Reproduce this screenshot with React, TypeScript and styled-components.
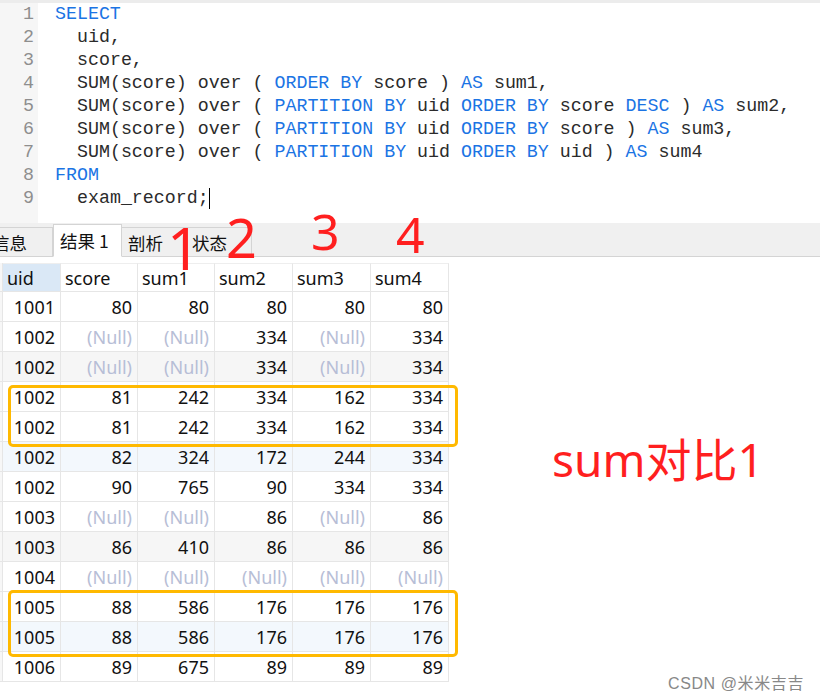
import { Fragment } from 'react';
import styled, { createGlobalStyle } from 'styled-components';

const GlobalStyle = createGlobalStyle`
  html, body {
    margin: 0;
    padding: 0;
    background: #ffffff;
  }
`;

const Page = styled.div`
  position: relative;
  width: 820px;
  height: 699px;
  overflow: hidden;
  background: #ffffff;
  font-family: "Noto Sans", "Noto Sans CJK SC", sans-serif;
`;

const Editor = styled.div`
  display: flex;
  height: 223px;
  border-top: 3px solid #ececec;
  box-sizing: border-box;
`;

const Gutter = styled.div`
  width: 38px;
  background: #f6f6f6;
  display: flex;
  flex-direction: column;
  align-items: flex-end;
  padding-right: 4px;
  box-sizing: border-box;
`;

const LineNo = styled.div`
  height: 23px;
  line-height: 23px;
  font-family: "Liberation Mono", monospace;
  font-size: 18.3px;
  color: #8e8e8e;
`;

const Code = styled.div`
  flex: 1;
  padding-left: 17px;
  font-family: "Liberation Mono", monospace;
  font-size: 18.3px;
  color: #2b2b2b;
`;

const Line = styled.div<{ indent?: boolean }>`
  height: 23px;
  line-height: 23px;
  white-space: pre;
  padding-left: ${(props) => (props.indent ? '22px' : '0')};
`;

const Kw = styled.span`
  color: #1b74e4;
`;

const Caret = styled.span`
  display: inline-block;
  width: 0;
  height: 21px;
  border-left: 1px solid #000;
  vertical-align: middle;
`;

const TabBar = styled.div`
  display: flex;
  align-items: flex-end;
  height: 34px;
  margin-left: -14px;
  background: #f0f0f0;
  border-bottom: 1px solid #d4d4d4;
  box-sizing: border-box;
`;

const Tab = styled.div<{ active?: boolean; w: number }>`
  width: ${(props) => props.w}px;
  height: ${(props) => (props.active ? '33px' : '30px')};
  margin-bottom: -1px;
  box-sizing: border-box;
  display: flex;
  align-items: center;
  padding-left: 6px;
  font-family: "Noto Sans CJK SC", sans-serif;
  font-size: 17.5px;
  color: #111;
  background: ${(props) => (props.active ? '#ffffff' : '#f0f0f0')};
  border: 1px solid #d4d4d4;
  border-bottom: ${(props) => (props.active ? '1px solid #ffffff' : '1px solid #d4d4d4')};
  border-left: ${(props) => (props.active ? '1px solid #d4d4d4' : 'none')};
`;

const Grid = styled.div`
  display: grid;
  grid-template-columns: 3px 58px 77px 77px 78px 78px 78px;
  margin-top: 6px;
  width: 449px;
`;

const Cell = styled.div<{ head?: boolean; sel?: boolean; bg?: string; nil?: boolean }>`
  box-sizing: border-box;
  height: ${(props) => (props.head ? '29px' : '30px')};
  border-right: 1px solid #e6e6e6;
  border-bottom: 1px solid #e6e6e6;
  border-top: ${(props) => (props.head ? '1px solid #eeeeee' : 'none')};
  background: ${(props) => (props.sel ? '#dae8f6' : props.bg || '#ffffff')};
  display: flex;
  align-items: center;
  justify-content: ${(props) => (props.head ? 'flex-start' : 'flex-end')};
  padding: ${(props) => (props.head ? '0 0 0 4px' : '0 5px 0 0')};
  font-size: 18px;
  color: ${(props) => (props.nil ? '#b7bed6' : '#111111')};
  white-space: nowrap;
`;

const RowHead = styled.div<{ head?: boolean }>`
  box-sizing: border-box;
  height: ${(props) => (props.head ? '29px' : '30px')};
  border-right: 1px solid #e6e6e6;
  border-bottom: 1px solid #e6e6e6;
  background: #f7f7f7;
`;

const Highlight = styled.div<{ top: number; h: number }>`
  position: absolute;
  left: 8px;
  top: ${(props) => props.top}px;
  width: 450px;
  height: ${(props) => props.h}px;
  border: 3px solid #ffb900;
  border-radius: 5px;
  box-sizing: border-box;
`;

const Mark = styled.div<{ x: number; y: number; size: number }>`
  position: absolute;
  left: ${(props) => props.x}px;
  top: ${(props) => props.y}px;
  font-family: "Noto Sans", sans-serif;
  font-size: ${(props) => props.size}px;
  line-height: 1;
  color: #ff1f1f;
`;

const Note = styled.div`
  position: absolute;
  left: 552px;
  top: 429px;
  font-family: "Noto Sans", "Noto Sans CJK SC", sans-serif;
  font-size: 46px;
  line-height: 60px;
  color: #ff1f1f;
`;

const Watermark = styled.div`
  position: absolute;
  left: 668px;
  top: 670px;
  font-family: "Liberation Sans", "Noto Sans CJK SC", sans-serif;
  font-size: 16px;
  letter-spacing: 0.6px;
  color: #888888;
`;

type Row = string[];

const columns = ['uid', 'score', 'sum1', 'sum2', 'sum3', 'sum4'];

const rows: Row[] = [
  ['1001', '80', '80', '80', '80', '80'],
  ['1002', '', '', '334', '', '334'],
  ['1002', '', '', '334', '', '334'],
  ['1002', '81', '242', '334', '162', '334'],
  ['1002', '81', '242', '334', '162', '334'],
  ['1002', '82', '324', '172', '244', '334'],
  ['1002', '90', '765', '90', '334', '334'],
  ['1003', '', '', '86', '', '86'],
  ['1003', '86', '410', '86', '86', '86'],
  ['1004', '', '', '', '', ''],
  ['1005', '88', '586', '176', '176', '176'],
  ['1005', '88', '586', '176', '176', '176'],
  ['1006', '89', '675', '89', '89', '89'],
];

const rowBg = (i: number) => {
  if (i === 2 || i === 8) return '#f6f6f6';
  if (i === 5 || i === 11) return '#f3f8fd';
  return '#ffffff';
};

export default function App() {
  return (
    <Page>
      <GlobalStyle />
      <Editor>
        <Gutter>
          {[1, 2, 3, 4, 5, 6, 7, 8, 9].map((n) => (
            <LineNo key={n}>{n}</LineNo>
          ))}
        </Gutter>
        <Code>
          <Line><Kw>SELECT</Kw></Line>
          <Line indent>uid,</Line>
          <Line indent>score,</Line>
          <Line indent>SUM(score) over ( <Kw>ORDER BY</Kw> score ) <Kw>AS</Kw> sum1,</Line>
          <Line indent>SUM(score) over ( <Kw>PARTITION BY</Kw> uid <Kw>ORDER BY</Kw> score <Kw>DESC</Kw> ) <Kw>AS</Kw> sum2,</Line>
          <Line indent>SUM(score) over ( <Kw>PARTITION BY</Kw> uid <Kw>ORDER BY</Kw> score ) <Kw>AS</Kw> sum3,</Line>
          <Line indent>SUM(score) over ( <Kw>PARTITION BY</Kw> uid <Kw>ORDER BY</Kw> uid ) <Kw>AS</Kw> sum4</Line>
          <Line><Kw>FROM</Kw></Line>
          <Line indent>exam_record;<Caret /></Line>
        </Code>
      </Editor>

      <TabBar>
        <Tab w={67}>信息</Tab>
        <Tab w={69} active>结果 1</Tab>
        <Tab w={64}>剖析</Tab>
        <Tab w={66}>状态</Tab>
      </TabBar>

      <Grid>
        <RowHead head />
        {columns.map((c, i) => (
          <Cell key={c} head sel={i === 0}>{c}</Cell>
        ))}
        {rows.map((r, i) => (
          <Fragment key={i}>
            <RowHead />
            {r.map((v, j) => (
              <Cell key={j} bg={rowBg(i)} nil={v === ''}>
                {v === '' ? '(Null)' : v}
              </Cell>
            ))}
          </Fragment>
        ))}
      </Grid>

      <Highlight top={385} h={62} />
      <Highlight top={590} h={67} />

      <Mark x={167} y={218} size={59}>1</Mark>
      <Mark x={226} y={210} size={54}>2</Mark>
      <Mark x={311} y={206} size={50}>3</Mark>
      <Mark x={396} y={209} size={50}>4</Mark>

      <Note>sum对比1</Note>
      <Watermark>CSDN @米米吉吉</Watermark>
    </Page>
  );
}
